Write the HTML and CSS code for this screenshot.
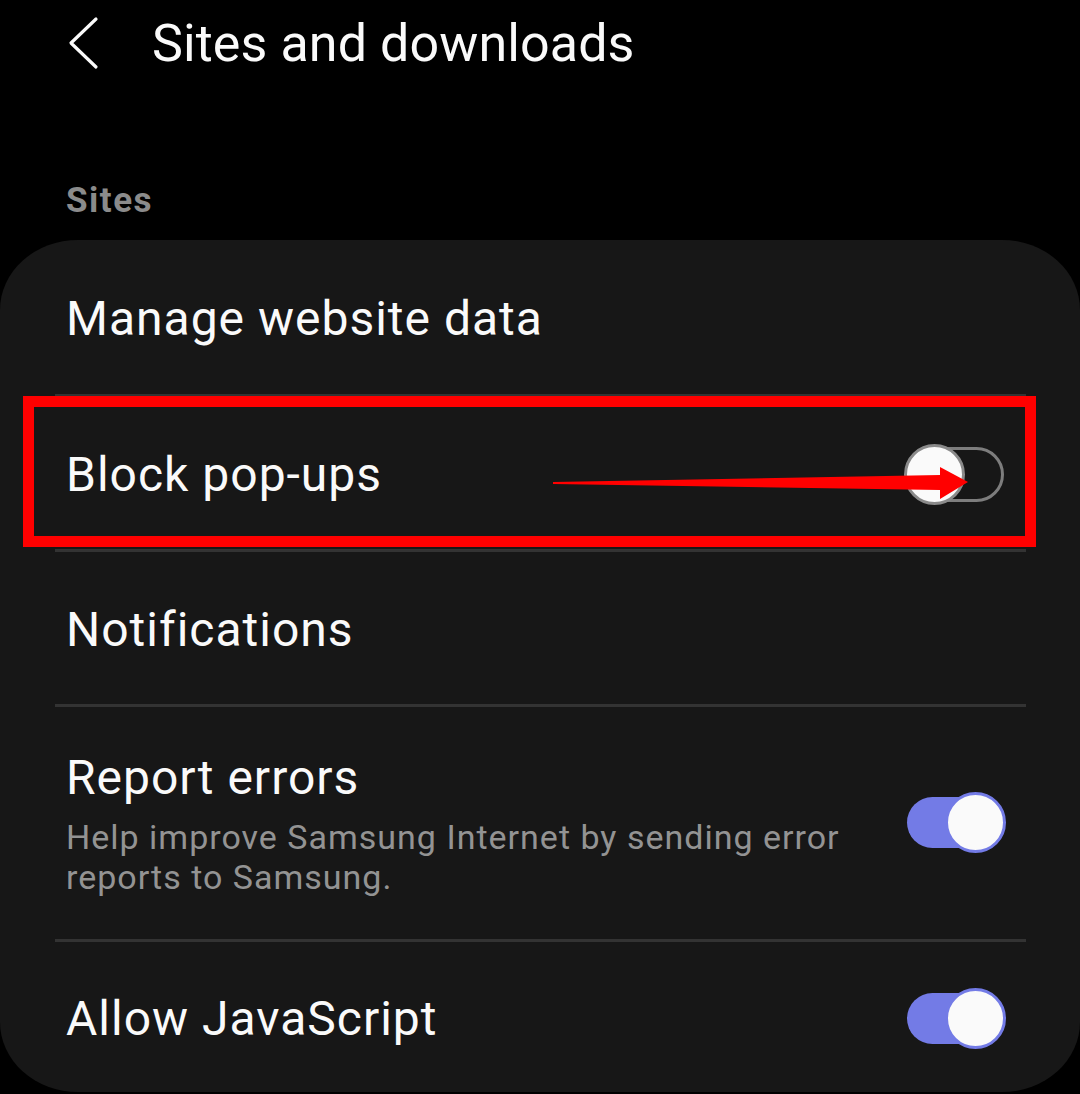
FILE: index.html
```html
<!DOCTYPE html>
<html>
<head>
<meta charset="utf-8">
<link rel="stylesheet" href="styles.css">
</head>
<body>
<div class="page">
  <header class="topbar">
    <svg class="back" width="34" height="54" viewBox="0 0 34 54">
      <polyline points="29,3 4,27 29,51" fill="none" stroke="#fafafa" stroke-width="3.2" stroke-linecap="round" stroke-linejoin="round"/>
    </svg>
    <h1 class="title">Sites and downloads</h1>
  </header>
  <div class="section-label">Sites</div>
  <div class="card">
    <div class="row row-first"><span class="row-title">Manage website data</span></div>
    <div class="divider"></div>
    <div class="row row-marked">
      <span class="row-title">Block pop-ups</span>
      <span class="toggle off"><span class="track"></span><span class="thumb"></span></span>
      <div class="highlight"></div>
      <svg class="arrow" width="1080" height="152" viewBox="0 397 1080 152">
        <polygon points="553,482 940,475 940,467 968,482 940,499 940,490 553,484" fill="#ff0000"/>
      </svg>
    </div>
    <div class="divider"></div>
    <div class="row"><span class="row-title">Notifications</span></div>
    <div class="divider"></div>
    <div class="row row-tall">
      <div class="row-text">
        <span class="row-title">Report errors</span>
        <span class="row-desc">Help improve Samsung Internet by sending error reports to Samsung.</span>
      </div>
      <span class="toggle on"><span class="track"></span><span class="thumb"></span></span>
    </div>
    <div class="divider"></div>
    <div class="row row-last">
      <span class="row-title">Allow JavaScript</span>
      <span class="toggle on"><span class="track"></span><span class="thumb"></span></span>
    </div>
  </div>
</div>
</body>
</html>
```
FILE: styles.css
```css
html, body {
  margin: 0;
  padding: 0;
  background: #000;
}
.page {
  width: 1080px;
  height: 1094px;
  background: #000;
  font-family: Roboto, "Liberation Sans", sans-serif;
  color: #fafafa;
  overflow: hidden;
}
.topbar {
  display: flex;
  align-items: center;
  height: 88px;
  padding-left: 67px;
}
.back {
  display: block;
  margin-top: -2px;
}
.title {
  margin: 0 0 0 51px;
  font-size: 52px;
  font-weight: 400;
  line-height: 88px;
  letter-spacing: 0.1px;
}
.section-label {
  margin-top: 93px;
  padding-left: 66px;
  font-size: 35px;
  font-weight: 700;
  line-height: 40px;
  height: 40px;
  color: #8b8b8b;
  letter-spacing: 1.5px;
}
.card {
  margin-top: 19px;
  background: #171717;
  border-radius: 78px / 70px;
  height: 852px;
  display: flex;
  flex-direction: column;
}
.row {
  position: relative;
  height: 152px;
  display: flex;
  align-items: center;
  justify-content: space-between;
  padding: 4px 74px 0 66px;
  box-sizing: border-box;
  flex: none;
}
.row-first {
  height: 154px;
}
.row-tall {
  height: 232px;
  padding-top: 0;
}
.row-last {
  height: 150px;
}
.row-title {
  font-size: 48px;
  line-height: 56px;
  letter-spacing: 1px;
}
.row-text {
  display: flex;
  flex-direction: column;
  width: 800px;
}
.row-desc {
  margin-top: 11px;
  font-size: 34px;
  line-height: 40px;
  color: #939393;
  letter-spacing: 1px;
}
.divider {
  height: 3px;
  margin: 0 54px 0 55px;
  background: #333;
  flex: none;
}
.toggle {
  position: relative;
  width: 102px;
  height: 62px;
  flex: none;
}
.toggle .track {
  position: absolute;
  left: 3px;
  right: 2px;
  top: 5px;
  bottom: 6px;
  border-radius: 28px;
  box-sizing: border-box;
}
.toggle .thumb {
  position: absolute;
  top: 0;
  width: 61px;
  height: 61px;
  border-radius: 50%;
  background: #fafafa;
  box-sizing: border-box;
}
.toggle.on .track {
  background: #737be6;
}
.toggle.on .thumb {
  right: 0;
  border: 3px solid #737be6;
}
.toggle.off .track {
  border: 3px solid #7d7d7d;
  top: 3px;
  bottom: 4px;
}
.toggle.off .thumb {
  left: 0;
  border: 3px solid #8a8a8a;
}
.highlight {
  position: absolute;
  left: 23px;
  top: -1px;
  width: 1013px;
  height: 151px;
  border: 11px solid #ff0000;
  box-sizing: border-box;
}
.arrow {
  position: absolute;
  left: 0;
  top: 0;
}
```
